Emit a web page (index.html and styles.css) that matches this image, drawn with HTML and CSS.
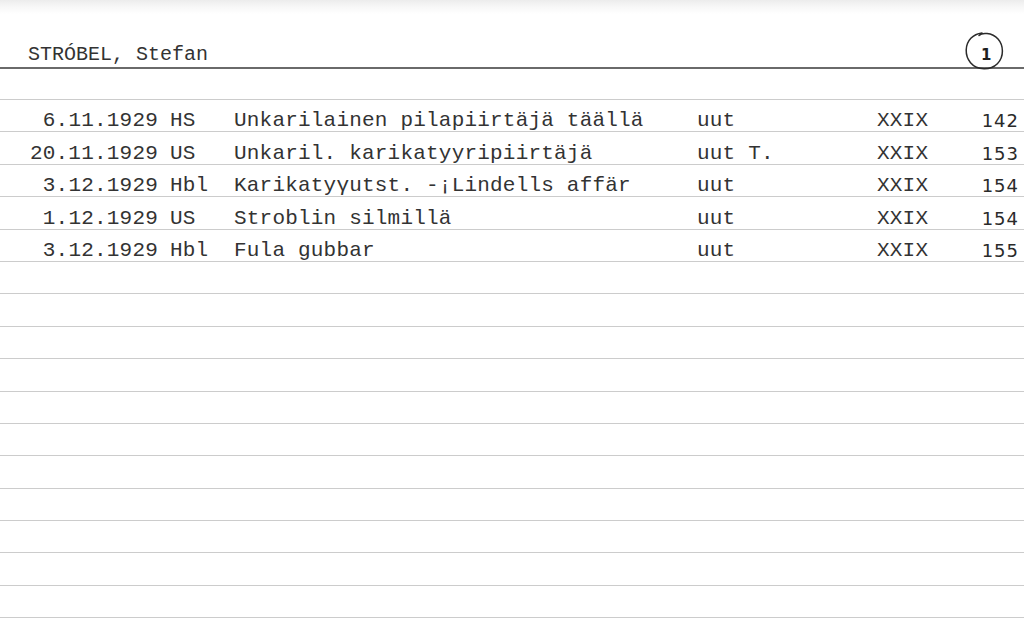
FILE: index.html
```html
<!DOCTYPE html>
<html lang="fi">
<head>
<meta charset="utf-8">
<title>STRÓBEL, Stefan</title>
<link rel="stylesheet" href="styles.css">
</head>
<body>
<div class="card">
  <div class="head">
    <span class="name">STRÓBEL, Stefan</span>
    <span class="cardno">
      <svg width="44" height="42" viewBox="0 0 44 42">
        <path d="M20 3 C11 4 4.5 10.5 4.2 20 C4 29 10 38.5 22 38.7 C33 38.9 40.5 31 40.4 21 C40.3 11.5 34 4.5 25 3.6 C21.5 3.2 18.5 4 17 5.5" fill="none" stroke="#2b2b2b" stroke-width="1.5" stroke-linecap="round"/>
      </svg>
      <span class="cardno-num">1</span>
    </span>
  </div>
  <div class="row blank-top"></div>

  <div class="row">
    <span class="c-date">6.11.1929</span><span class="c-src">HS</span><span class="c-title">Unkarilainen pilapiirtäjä täällä</span><span class="c-note">uut</span><span class="c-vol">XXIX</span><span class="c-page">142</span>
  </div>
  <div class="row">
    <span class="c-date">20.11.1929</span><span class="c-src">US</span><span class="c-title">Unkaril. karikatyyripiirtäjä</span><span class="c-note">uut T.</span><span class="c-vol">XXIX</span><span class="c-page">153</span>
  </div>
  <div class="row">
    <span class="c-date">3.12.1929</span><span class="c-src">Hbl</span><span class="c-title">Karikatyγutst. -¡Lindells affär</span><span class="c-note">uut</span><span class="c-vol">XXIX</span><span class="c-page">154</span>
  </div>
  <div class="row">
    <span class="c-date">1.12.1929</span><span class="c-src">US</span><span class="c-title">Stroblin silmillä</span><span class="c-note">uut</span><span class="c-vol">XXIX</span><span class="c-page">154</span>
  </div>
  <div class="row">
    <span class="c-date">3.12.1929</span><span class="c-src">Hbl</span><span class="c-title">Fula gubbar</span><span class="c-note">uut</span><span class="c-vol">XXIX</span><span class="c-page">155</span>
  </div>

  <div class="row"></div>
  <div class="row"></div>
  <div class="row"></div>
  <div class="row"></div>
  <div class="row"></div>
  <div class="row"></div>
  <div class="row"></div>
  <div class="row"></div>
  <div class="row"></div>
  <div class="row"></div>
  <div class="row"></div>
  <div class="row"></div>
</div>
</body>
</html>
```

FILE: styles.css
```css
html, body {
  margin: 0;
  padding: 0;
  background: #ffffff;
}

body {
  width: 1024px;
  height: 629px;
  overflow: hidden;
  font-family: "Liberation Mono", "DejaVu Sans Mono", monospace;
  color: #333333;
}

.card {
  width: 1024px;
  background: linear-gradient(to bottom, #ececec 0px, #f6f6f6 6px, #ffffff 14px);
}

.head {
  box-sizing: border-box;
  height: 69px;
  border-bottom: 2px solid #6a6a6a;
  display: flex;
  align-items: flex-end;
  justify-content: space-between;
  padding: 0 18px 0 28px;
}

.name {
  font-size: 20px;
  line-height: 20px;
  padding-bottom: 2px;
}

.cardno {
  position: relative;
  width: 44px;
  height: 42px;
  margin-bottom: -5px;
}

.cardno svg {
  display: block;
}

.cardno-num {
  position: absolute;
  left: 19px;
  top: 18px;
  font-family: "DejaVu Sans", sans-serif;
  font-weight: bold;
  font-size: 15px;
  line-height: 15px;
  color: #1e1e1e;
}

.row {
  box-sizing: border-box;
  height: 32.4px;
  border-bottom: 1px solid #cccccc;
  display: grid;
  grid-template-columns: 158px 76px 463px 180px 1fr 62px;
  align-items: end;
  font-size: 21px;
  line-height: 21px;
  letter-spacing: 0.2px;
}

.blank-top {
  height: 31px;
}

.c-date {
  text-align: right;
}

.c-src {
  padding-left: 12px;
}

.c-page {
  text-align: right;
  padding-right: 5px;
  font-family: "DejaVu Sans", sans-serif;
  font-size: 18px;
  font-weight: normal;
  letter-spacing: 1px;
  color: #2a2a2a;
}
```
